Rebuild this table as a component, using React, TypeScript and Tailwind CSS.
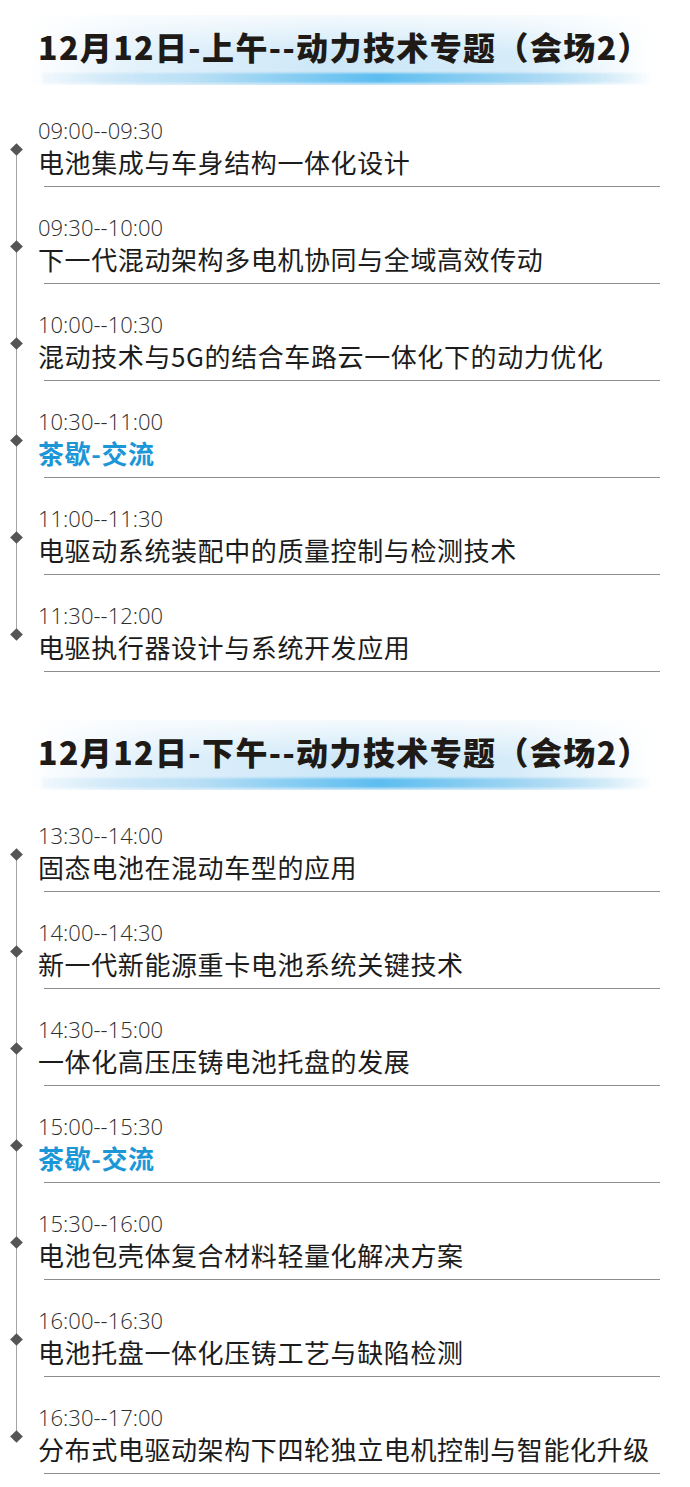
import React from 'react';

type Session = { time: string; title: string; brk?: boolean };

const morning: Session[] = [
  { time: '09:00--09:30', title: '电池集成与车身结构一体化设计' },
  { time: '09:30--10:00', title: '下一代混动架构多电机协同与全域高效传动' },
  { time: '10:00--10:30', title: '混动技术与5G的结合车路云一体化下的动力优化' },
  { time: '10:30--11:00', title: '茶歇-交流', brk: true },
  { time: '11:00--11:30', title: '电驱动系统装配中的质量控制与检测技术' },
  { time: '11:30--12:00', title: '电驱执行器设计与系统开发应用' },
];

const afternoon: Session[] = [
  { time: '13:30--14:00', title: '固态电池在混动车型的应用' },
  { time: '14:00--14:30', title: '新一代新能源重卡电池系统关键技术' },
  { time: '14:30--15:00', title: '一体化高压压铸电池托盘的发展' },
  { time: '15:00--15:30', title: '茶歇-交流', brk: true },
  { time: '15:30--16:00', title: '电池包壳体复合材料轻量化解决方案' },
  { time: '16:00--16:30', title: '电池托盘一体化压铸工艺与缺陷检测' },
  { time: '16:30--17:00', title: '分布式电驱动架构下四轮独立电机控制与智能化升级' },
];

const cjk = { fontFamily: '"Noto Sans CJK SC", "Noto Sans", sans-serif' };

function Banner({ text }: { text: string }) {
  return (
    <div className="ml-[28px] w-[625px] h-[70px] flex flex-col bg-[linear-gradient(180deg,rgba(255,255,255,0.8)_0%,rgba(255,255,255,0)_55%),linear-gradient(90deg,rgba(255,255,255,0)_0%,#e2f1fb_18%,#cce7f8_50%,#d6ecf9_78%,rgba(255,255,255,0)_100%)]">
      <h2
        className="pl-[10px] pt-[11px] text-[32px] leading-[40px] font-black tracking-[1.4px] text-[#201a17] whitespace-nowrap"
        style={cjk}
      >
        {text}
      </h2>
      <div className="mt-auto mb-[2px] ml-[14px] h-[10px] blur-[1px] bg-[linear-gradient(90deg,rgba(220,238,250,0.3)_0%,#b9dff5_25%,#5cbdf0_55%,#a6d7f3_80%,rgba(255,255,255,0)_100%)]" />
    </div>
  );
}

function Item({ s, first, last }: { s: Session; first: boolean; last: boolean }) {
  return (
    <div className="flex">
      <div className="w-[33px] flex flex-col items-center">
        <div className={`w-px h-[28px] ${first ? '' : 'bg-[#a6a6a6]'}`} />
        <div className="w-[9px] h-[9px] rotate-45 bg-[#555555]" />
        <div className={`w-px flex-1 ${last ? '' : 'bg-[#a6a6a6]'}`} />
      </div>
      <div className="flex-1 pl-[5px] pr-[30px] pb-[27px]">
        <div
          className="h-[26px] leading-[26px] text-[22px] font-light text-[#2e2e2e] whitespace-nowrap"
          style={{ fontFamily: '"Open Sans", "Noto Sans", sans-serif' }}
        >
          {s.time}
        </div>
        <div
          className={`mt-[2px] h-[34px] leading-[34px] text-[26px] tracking-[0.6px] whitespace-nowrap ${
            s.brk ? 'font-bold text-[#1b97d8]' : 'text-[#1c1c1c]'
          }`}
          style={cjk}
        >
          {s.title}
        </div>
        <div className="mt-[7px] ml-[6px] h-px bg-[#8c8c8c]" />
      </div>
    </div>
  );
}

function Section({ heading, items }: { heading: string; items: Session[] }) {
  return (
    <section>
      <Banner text={heading} />
      <div className="mt-[32px]">
        {items.map((s, i) => (
          <Item key={i} s={s} first={i === 0} last={i === items.length - 1} />
        ))}
      </div>
    </section>
  );
}

export default function App() {
  return (
    <div className="w-[690px] h-[1487px] overflow-hidden bg-white">
      <div className="pt-[15px]">
        <Section heading="12月12日-上午--动力技术专题（会场2）" items={morning} />
      </div>
      <div className="pt-[21px]">
        <Section heading="12月12日-下午--动力技术专题（会场2）" items={afternoon} />
      </div>
    </div>
  );
}
